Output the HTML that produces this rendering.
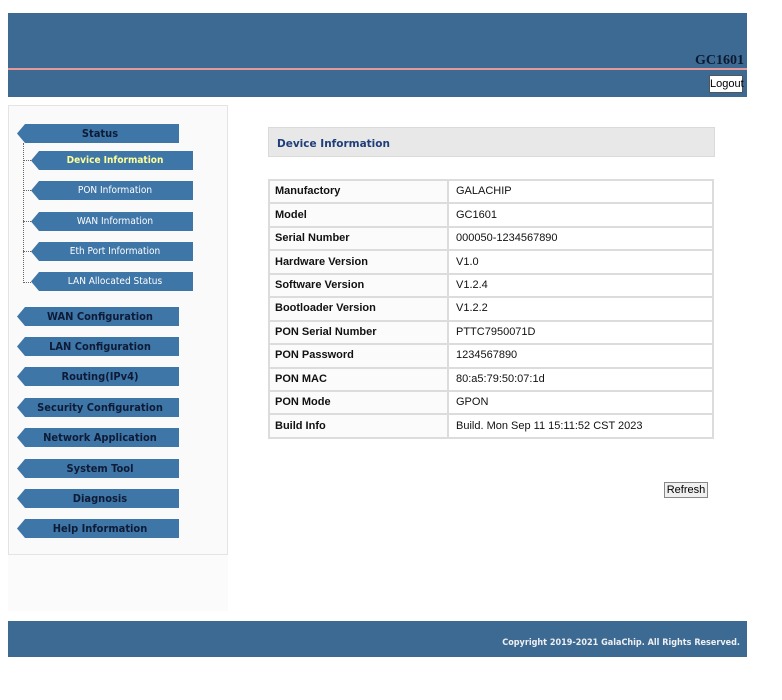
<!DOCTYPE html>
<html><head><meta charset="utf-8"><style>
*{margin:0;padding:0;box-sizing:border-box}
body{width:782px;height:700px;background:#fff;position:relative;font-family:"Liberation Sans",Arial,sans-serif;overflow:hidden}
.a{position:absolute}
.hdr{left:8px;top:13px;width:739px;height:84px;background:#3d6a92}
.line{left:8px;top:68px;width:739px;height:2px;background:#e59a98}
.gc{right:38px;top:53px;font:bold 14px "Liberation Serif",serif;color:#0d1a33}
.logout{left:709px;top:75px;width:34px;height:18px;background:#fff;border:1px solid #555;font-size:11px;text-align:center;line-height:16px;color:#000}
.side{left:8px;top:105px;width:220px;height:450px;background:#fafafa;border:1px solid #e4e4e4}
.side2{left:8px;top:555px;width:220px;height:56px;background:#fbfbfb}
.tab{position:absolute;height:19px;background:#3f76a8;clip-path:polygon(0 50%,8px 0,100% 0,100% 100%,8px 100%);text-align:center;font:bold 11px "DejaVu Sans Condensed","DejaVu Sans",sans-serif;line-height:19px;color:#0e1b36}
.t{left:17px;width:162px;padding-left:4px}
.s{left:31px;width:162px;font-weight:normal;font-size:10px;color:#fff;padding-left:6px}
.sel{color:#ffff99;font-weight:bold}
.dv{left:23px;top:143px;height:140px;border-left:1px dotted #666}
.dh{left:23px;width:8px;border-top:1px dotted #666}
.box{left:268px;top:127px;width:447px;height:30px;background:#e8e8e8;border:1px solid #dadada;font:bold 10.5px "DejaVu Sans",Verdana,sans-serif;color:#1f3e7a;padding-left:8px;line-height:33px}
table{position:absolute;left:268px;top:179px;width:446px;border-collapse:collapse;font-size:11px;color:#111}
td{border:2px solid #dcdcdc;height:23.45px;padding:0 5px;line-height:19px}
td:first-child{width:179px;font-weight:bold;background:#fbfbfb}
td:last-child{padding-left:7px}
.ref{left:664px;top:482px;width:44px;height:16px;border:1px solid #888;background:#f0f0f0;font-size:11px;text-align:center;line-height:14px;color:#000}
.ftr{left:8px;top:621px;width:739px;height:36px;background:#3d6a92}
.cp{right:42px;top:638px;font:bold 9px "DejaVu Sans Condensed","DejaVu Sans",sans-serif;color:#eef0f4}
</style></head><body>
<div class="a hdr"></div><div class="a line"></div>
<div class="a gc">GC1601</div>
<div class="a logout">Logout</div>
<div class="a side"></div><div class="a side2"></div>
<div class="a dv"></div>
<div class="a dh" style="top:160px"></div><div class="a dh" style="top:190px"></div><div class="a dh" style="top:221px"></div><div class="a dh" style="top:251px"></div><div class="a dh" style="top:282px"></div>
<div class="tab t" style="top:124px">Status</div>
<div class="tab s sel" style="top:151px">Device Information</div>
<div class="tab s" style="top:181px">PON Information</div>
<div class="tab s" style="top:212px">WAN Information</div>
<div class="tab s" style="top:242px">Eth Port Information</div>
<div class="tab s" style="top:272px">LAN Allocated Status</div>
<div class="tab t" style="top:307px">WAN Configuration</div>
<div class="tab t" style="top:337px">LAN Configuration</div>
<div class="tab t" style="top:367px">Routing(IPv4)</div>
<div class="tab t" style="top:398px">Security Configuration</div>
<div class="tab t" style="top:428px">Network Application</div>
<div class="tab t" style="top:459px">System Tool</div>
<div class="tab t" style="top:489px">Diagnosis</div>
<div class="tab t" style="top:519px">Help Information</div>
<div class="a box">Device Information</div>
<table>
<tr><td>Manufactory</td><td>GALACHIP</td></tr>
<tr><td>Model</td><td>GC1601</td></tr>
<tr><td>Serial Number</td><td>000050-1234567890</td></tr>
<tr><td>Hardware Version</td><td>V1.0</td></tr>
<tr><td>Software Version</td><td>V1.2.4</td></tr>
<tr><td>Bootloader Version</td><td>V1.2.2</td></tr>
<tr><td>PON Serial Number</td><td>PTTC7950071D</td></tr>
<tr><td>PON Password</td><td>1234567890</td></tr>
<tr><td>PON MAC</td><td>80:a5:79:50:07:1d</td></tr>
<tr><td>PON Mode</td><td>GPON</td></tr>
<tr><td>Build Info</td><td>Build. Mon Sep 11 15:11:52 CST 2023</td></tr>
</table>
<div class="a ref">Refresh</div>
<div class="a ftr"></div>
<div class="a cp">Copyright 2019-2021 GalaChip. All Rights Reserved.</div>
</body></html>
